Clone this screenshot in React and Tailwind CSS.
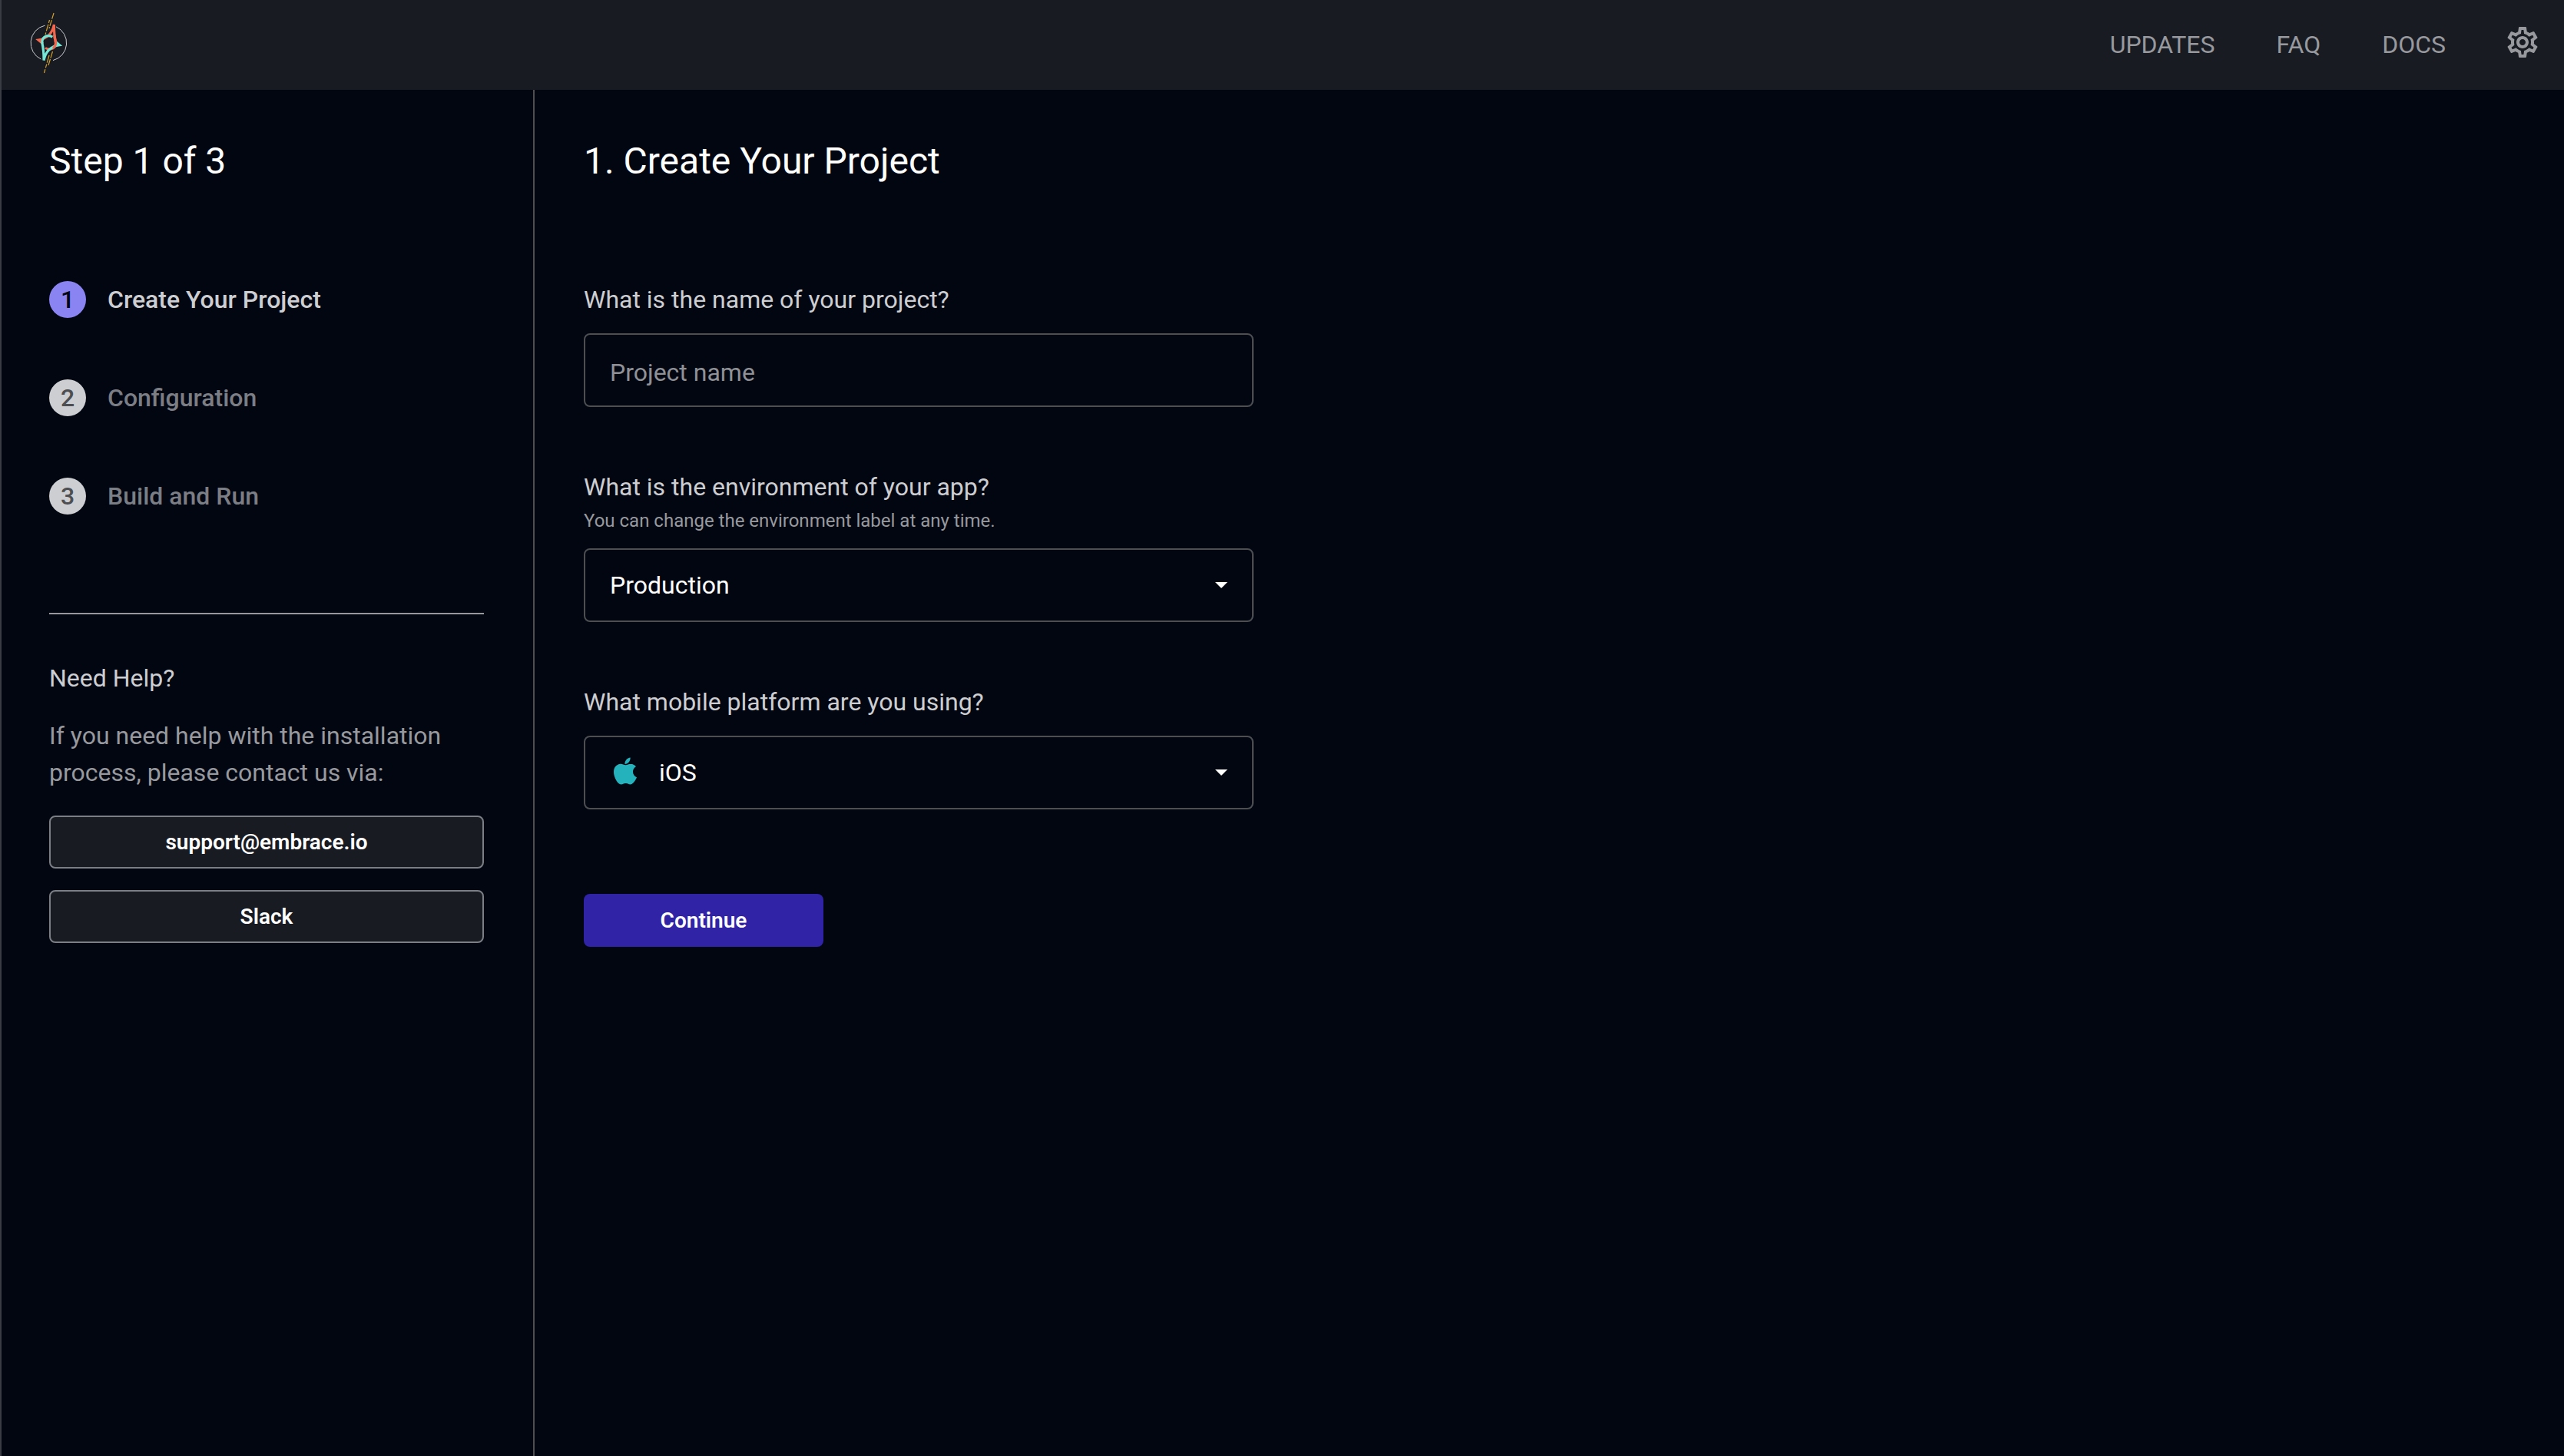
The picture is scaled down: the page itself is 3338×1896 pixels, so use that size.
import { MdOutlineSettings } from "react-icons/md";
import { IoLogoApple } from "react-icons/io5";

const steps = ["Create Your Project", "Configuration", "Build and Run"];
const links = ["UPDATES", "FAQ", "DOCS"];

const STAR_HALF = "M56 56L50 51C61 49.500 68 43 70.400 31C70.300 42 71 47 72.500 53.500Q73 59 69 61.800Q64 64.500 59 61.500";

function Logo() {
  return (
    <svg viewBox="36 12 56 84" className="h-[84px] w-14" fill="none" aria-hidden="true">
      <path d="M58.500 32.200A23.300 23.300 0 0 0 53.500 76.100M73 33.800A23.300 23.300 0 0 1 69 77.600" stroke="#c9cacd" strokeWidth="1" />
      <g stroke="#d2a02c" strokeWidth="1.2">
        <path d="M70 16L64 36" strokeDasharray="8 1.500" />
        <path d="M64.500 25L59 44" strokeDasharray="4 2 9 2" />
        <path d="M68.500 66L63 84" strokeDasharray="9 1.500" />
        <path d="M64 71L57.500 94" strokeDasharray="10 2 5 2" />
      </g>
      <g strokeWidth="3.200" strokeMiterlimit="7">
        <path d={STAR_HALF} stroke="#f4674f" />
        <path d={STAR_HALF} stroke="#73e6d5" transform="rotate(180 63.700 54.300)" />
      </g>
      <path d="M70.600 44Q71 49 72.500 53.500Q73 59 69 61.800" stroke="#f4674f" strokeWidth="3.200" />
    </svg>
  );
}

function Caret() {
  return (
    <svg viewBox="0 0 16 8" className="pointer-events-none absolute right-[34px] top-11 h-2 w-4" fill="#fff" aria-hidden="true">
      <path d="M0 0h16L8 8z" />
    </svg>
  );
}

const fieldClass =
  "h-24 w-full appearance-none rounded-lg border-2 border-[#4d4e52] bg-transparent px-8 text-[32px] text-white placeholder:text-[#8f9197]";
const helpClass =
  "flex h-[69px] items-center justify-center rounded-lg border-2 border-[#7c7e85] bg-[#181b22] text-[28px] font-semibold text-white";

export default function App() {
  return (
    <div className="flex min-h-screen flex-col border-l-2 border-[#3a3c44] bg-[#020611] font-['Roboto',sans-serif] text-[32px] leading-[48px] text-[#cdced1]">
      <header className="flex h-[117px] items-center justify-between bg-[#181b22] pb-2 pl-[34px] pr-[30px]">
        <a href="#home" aria-label="Home">
          <Logo />
        </a>
        <nav className="flex items-center gap-20 text-[#97999e]">
          {links.map((l) => (
            <a key={l} href={"#" + l.toLowerCase()} className="pt-1.5">
              {l}
            </a>
          ))}
          <button aria-label="Settings" className="-ml-1">
            <MdOutlineSettings className="size-12" />
          </button>
        </nav>
      </header>
      <div className="flex flex-1">
        <aside className="w-[694px] shrink-0 border-r-2 border-[#4d4e52] pl-[62px] pr-16 pt-[61px]">
          <h2 className="text-[48px] leading-[64px] text-white">Step 1 of 3</h2>
          <ol className="mt-[124px] flex flex-col gap-20 font-medium">
            {steps.map((s, i) => (
              <li key={s} className="flex items-center gap-7">
                <span
                  className={
                    i === 0
                      ? "size-12 rounded-full bg-[#8a84f3] text-center text-[#030611]"
                      : "size-12 rounded-full bg-[#cdced1] text-center text-[#4d4e52]"
                  }
                >
                  {i + 1}
                </span>
                <span className={i === 0 ? "" : "text-[#7c7e85]"}>{s}</span>
              </li>
            ))}
          </ol>
          <hr className="mt-32 border-t-2 border-[#97999e]" />
          <h3 className="mt-[59px]">Need Help?</h3>
          <p className="mt-[27px] text-[#97999e]">If you need help with the installation process, please contact us via:</p>
          <div className="mt-8 flex flex-col gap-7">
            <a href="mailto:support@embrace.io" className={helpClass}>
              support@embrace.io
            </a>
            <a href="#slack" className={helpClass}>
              Slack
            </a>
          </div>
        </aside>
        <main className="flex-1 px-16 pt-[61px]">
          <h1 className="text-[48px] leading-[64px] text-white">1. Create Your Project</h1>
          <form className="mt-[124px] max-w-[872px]">
            <label htmlFor="name" className="block">
              What is the name of your project?
            </label>
            <input id="name" placeholder="Project name" className={fieldClass + " mt-5 pt-1.5"} />
            <label htmlFor="env" className="mt-20 block">
              What is the environment of your app?
            </label>
            <p className="text-[24px] leading-10 text-[#97999e]">You can change the environment label at any time.</p>
            <div className="relative mt-4">
              <select id="env" className={fieldClass}>
                <option>Production</option>
              </select>
              <Caret />
            </div>
            <label htmlFor="platform" className="mt-20 block">
              What mobile platform are you using?
            </label>
            <div className="relative mt-5">
              <IoLogoApple className="pointer-events-none absolute left-[34px] top-[26px] size-10 text-[#24b2bd]" />
              <select id="platform" className={fieldClass + " pl-24"}>
                <option>iOS</option>
              </select>
              <Caret />
            </div>
            <button type="button" className="mt-[110px] h-[69px] w-[312px] rounded-lg bg-[#3023a5] text-[28px] font-semibold text-white">
              Continue
            </button>
          </form>
        </main>
      </div>
    </div>
  );
}
